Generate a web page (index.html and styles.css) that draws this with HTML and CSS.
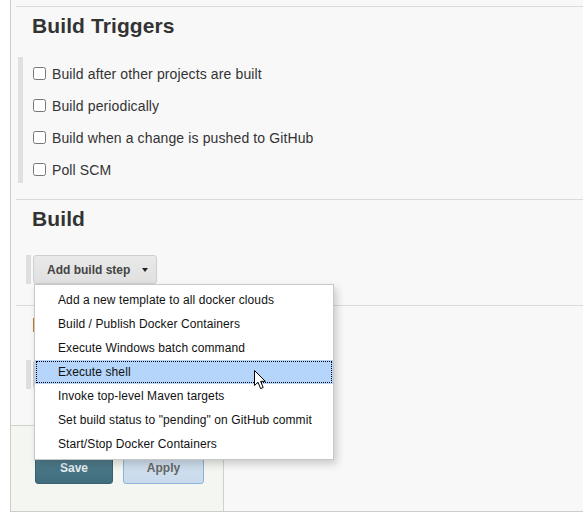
FILE: index.html
```html
<!DOCTYPE html>
<html>
<head>
<meta charset="utf-8">
<link rel="stylesheet" href="styles.css">
</head>
<body>
<div class="page">
  <section class="section">
    <h2 class="sec-title">Build Triggers</h2>
    <div class="opt-block">
      <label class="opt"><input type="checkbox" class="cb"><span class="opt-label">Build after other projects are built</span></label>
      <label class="opt"><input type="checkbox" class="cb"><span class="opt-label">Build periodically</span></label>
      <label class="opt"><input type="checkbox" class="cb"><span class="opt-label">Build when a change is pushed to GitHub</span></label>
      <label class="opt"><input type="checkbox" class="cb"><span class="opt-label">Poll SCM</span></label>
    </div>
  </section>
  <section class="section sec-build">
    <h2 class="sec-title">Build</h2>
    <div class="btn-row">
      <div class="dropdown">
        <button class="btn-add">Add build step<span class="caret"></span></button>
        <ul class="menu">
          <li class="menu-item">Add a new template to all docker clouds</li>
          <li class="menu-item">Build / Publish Docker Containers</li>
          <li class="menu-item">Execute Windows batch command</li>
          <li class="menu-item is-active">Execute shell</li>
          <li class="menu-item">Invoke top-level Maven targets</li>
          <li class="menu-item">Set build status to "pending" on GitHub commit</li>
          <li class="menu-item">Start/Stop Docker Containers</li>
        </ul>
      </div>
    </div>
  </section>
  <section class="section sec-post">
    <h2 class="sec-title">Post-build Actions</h2>
    <div class="btn-row">
      <button class="btn-add">Add post-build action<span class="caret"></span></button>
    </div>
  </section>
  <div class="bottom">
    <button class="btn btn-save">Save</button>
    <button class="btn btn-apply">Apply</button>
  </div>
</div>
<svg class="cursor" width="14" height="21" viewBox="0 0 14 21">
  <path d="M0.5 0.5 L0.5 15.5 L4 12.2 L6.6 18.6 L9.2 17.5 L6.6 11.3 L11.3 11.3 Z" fill="#fff" stroke="#000" stroke-width="1" stroke-linejoin="miter"/>
</svg>
</body>
</html>
```
FILE: styles.css
```css
* { box-sizing: border-box; }
html, body { margin: 0; padding: 0; background: #fff; }
body {
  font-family: "Liberation Sans", Arial, sans-serif;
  color: #333;
  position: relative;
  width: 583px;
  height: 521px;
  overflow: hidden;
}
.page {
  margin-left: 10px;
  height: 512px;
  border-left: 1px solid #cdcdcd;
  border-bottom: 1px solid #cdcdcd;
  background: #f8f8f8;
  padding-top: 6px;
  display: flex;
  flex-direction: column;
}
.section {
  margin-left: 5px;
  border-top: 1px solid #dadada;
  padding-left: 16px;
  padding-bottom: 16px;
}
.sec-title {
  margin: 7px 0 0;
  font-size: 21px;
  line-height: 24px;
  font-weight: bold;
  color: #333;
  letter-spacing: 0.1px;
}
.opt-block {
  margin: 19px 0 0 -14px;
  border-left: 5px solid #e0e0e0;
  padding-left: 10px;
}
.opt {
  display: flex;
  align-items: flex-start;
  height: 32px;
}
.opt:last-child { height: 30px; }
.cb {
  margin: 10px 6px 0 0;
  width: 13px;
  height: 13px;
  flex: none;
}
.opt-label {
  padding-top: 8px;
  font-size: 14px;
  line-height: 18px;
  color: #333;
  letter-spacing: 0.12px;
}
.sec-build { padding-bottom: 21px; }
.sec-post { padding-bottom: 0; }
.btn-row {
  margin: 24px 0 0 -6px;
  border-left: 5px solid #dedede;
  padding-left: 2px;
  height: 29px;
}
.sec-post .btn-row { margin-top: 23px; }
.dropdown { position: relative; display: inline-block; }
.btn-add {
  display: inline-flex;
  align-items: center;
  height: 29px;
  margin: 0;
  padding: 0 8px 0 13px;
  font-family: "Liberation Sans", Arial, sans-serif;
  font-size: 12px;
  font-weight: bold;
  color: #444;
  background: linear-gradient(#e9e9e9, #e0e0e0);
  border: 1px solid #cfcfcf;
  border-radius: 3px;
}
.caret {
  display: inline-block;
  width: 0;
  height: 0;
  margin-left: 12px;
  border-left: 3.5px solid transparent;
  border-right: 3.5px solid transparent;
  border-top: 4px solid #222;
}
.menu {
  position: absolute;
  left: 1px;
  top: 29px;
  width: 300px;
  margin: 0;
  padding: 3px 0;
  list-style: none;
  background: #fff;
  border: 1px solid #c8c8c8;
  box-shadow: 3px 4px 8px rgba(0, 0, 0, 0.18);
  z-index: 5;
}
.menu-item {
  height: 24px;
  line-height: 24px;
  padding-left: 23px;
  font-size: 12px;
  color: #111;
  white-space: nowrap;
  letter-spacing: 0.1px;
}
.menu-item.is-active {
  background: #b5d5fb;
  outline: 1px dotted #000;
  outline-offset: -2px;
}
.bottom {
  margin-top: auto;
  width: 213px;
  height: 86px;
  background: #f4f7f1;
  border-top: 1px solid #c9d6c4;
  border-right: 1px solid #c9d6c4;
  padding: 27px 0 0 24px;
  display: flex;
  align-items: flex-start;
  gap: 10px;
}
.btn {
  height: 31px;
  margin: 0;
  padding: 0 0 2px;
  font-family: "Liberation Sans", Arial, sans-serif;
  font-size: 12px;
  font-weight: bold;
  border-radius: 3px;
}
.btn-save {
  width: 78px;
  color: #e6eef2;
  background: linear-gradient(#55808f, #3f6d7e);
  border: 1px solid #3a6070;
}
.btn-apply {
  width: 81px;
  color: #666;
  background: linear-gradient(#d4e2f0, #c8daec);
  border: 1px solid #8db3d9;
}
.cursor {
  position: absolute;
  left: 254px;
  top: 370px;
  z-index: 10;
}
```
